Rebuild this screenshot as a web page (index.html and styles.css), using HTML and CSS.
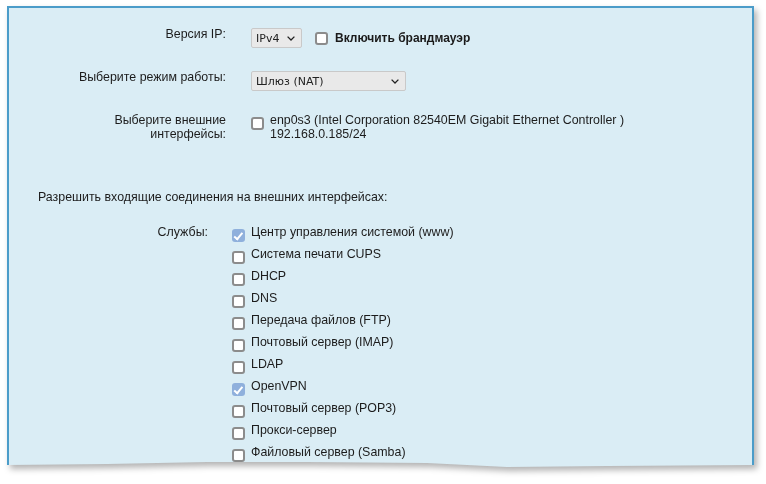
FILE: index.html
```html
<!DOCTYPE html>
<html lang="ru">
<head>
<meta charset="utf-8">
<title>Брандмауэр</title>
<link rel="stylesheet" href="styles.css">
</head>
<body>
<div class="shot">
  <div class="panel">
    <div class="form">
      <div class="lbl">Версия IP:</div>
      <div class="ctl inline">
        <div class="select sel-ip"><span>IPv4</span><svg class="chev" viewBox="0 0 8 5" width="8" height="5"><path d="M0.6 0.6 L4 4 L7.4 0.6" fill="none" stroke="#222" stroke-width="1.3"/></svg></div>
        <div class="check fw"><span class="box"></span><b>Включить брандмауэр</b></div>
      </div>

      <div class="lbl">Выберите режим работы:</div>
      <div class="ctl">
        <div class="select sel-mode"><span>Шлюз (NAT)</span><svg class="chev" viewBox="0 0 8 5" width="8" height="5"><path d="M0.6 0.6 L4 4 L7.4 0.6" fill="none" stroke="#222" stroke-width="1.3"/></svg></div>
      </div>

      <div class="lbl two">Выберите внешние<br>интерфейсы:</div>
      <div class="opt iface">
        <span class="box"></span>
        <span class="opt-text">enp0s3 (Intel Corporation 82540EM Gigabit Ethernet Controller )<br>192.168.0.185/24</span>
      </div>
    </div>

    <p class="allow">Разрешить входящие соединения на внешних интерфейсах:</p>

    <div class="services">
      <div class="lbl">Службы:</div>
      <div class="list">
        <div class="opt"><span class="box on"></span><span class="opt-text">Центр управления системой (www)</span></div>
        <div class="opt"><span class="box"></span><span class="opt-text">Система печати CUPS</span></div>
        <div class="opt"><span class="box"></span><span class="opt-text">DHCP</span></div>
        <div class="opt"><span class="box"></span><span class="opt-text">DNS</span></div>
        <div class="opt"><span class="box"></span><span class="opt-text">Передача файлов (FTP)</span></div>
        <div class="opt"><span class="box"></span><span class="opt-text">Почтовый сервер (IMAP)</span></div>
        <div class="opt"><span class="box"></span><span class="opt-text">LDAP</span></div>
        <div class="opt"><span class="box on"></span><span class="opt-text">OpenVPN</span></div>
        <div class="opt"><span class="box"></span><span class="opt-text">Почтовый сервер (POP3)</span></div>
        <div class="opt"><span class="box"></span><span class="opt-text">Прокси-сервер</span></div>
        <div class="opt"><span class="box"></span><span class="opt-text">Файловый сервер (Samba)</span></div>
      </div>
    </div>
  </div>
</div>
</body>
</html>
```
FILE: styles.css
```css
html, body {
  margin: 0;
  padding: 0;
  background: #ffffff;
}
body {
  width: 766px;
  height: 484px;
  overflow: hidden;
  font-family: "Liberation Sans", Arial, sans-serif;
  font-size: 12.4px;
  line-height: 15px;
  color: #1c1c1c;
}
.shot {
  padding: 6px 0 0 7px;
  filter: drop-shadow(3px 4px 3px rgba(0, 0, 0, 0.3));
}
.panel {
  width: 743px;
  height: 461px;
  background: #daedf5;
  border: 2px solid #4b9cc9;
  border-bottom: none;
  overflow: hidden;
  clip-path: polygon(0 0, 100% 0, 100% 459px, 600px 460px, 500px 461px, 420px 457px, 300px 456px, 200px 456px, 100px 458px, 0 459px);
}
.form {
  display: grid;
  grid-template-columns: 217px auto;
  column-gap: 25px;
  row-gap: 21px;
  align-items: start;
  padding-top: 18px;
}
.lbl {
  text-align: right;
  padding-top: 1px;
}
.lbl.two {
  line-height: 14px;
  padding-top: 1px;
}
.ctl {
  margin-top: 2px;
}
.inline {
  display: flex;
  align-items: center;
}
.select {
  display: flex;
  align-items: center;
  justify-content: space-between;
  box-sizing: border-box;
  height: 20px;
  padding: 0 6px 0 4px;
  background: #e9e9e9;
  border: 1px solid #c9c9c9;
  border-radius: 2px;
  font-family: "DejaVu Sans", sans-serif;
  font-size: 11px;
  color: #222;
}
.sel-ip { width: 51px; }
.sel-mode { width: 155px; }
.chev { display: block; }
.check {
  display: flex;
  align-items: center;
}
.fw {
  margin-left: 13px;
}
.fw b {
  margin-left: 7px;
  font-family: "Liberation Sans", Arial, sans-serif;
  font-weight: bold;
  font-size: 12px;
  color: #1a1a1a;
}
.box {
  flex: none;
  display: block;
  box-sizing: border-box;
  width: 13px;
  height: 13px;
  background: #ffffff;
  border: 2px solid #8c8c8c;
  border-radius: 3px;
}
.box.on {
  background: #8fb0dc;
  border: none;
  position: relative;
}
.box.on::after {
  content: "";
  position: absolute;
  left: 4px;
  top: 1.5px;
  width: 3px;
  height: 6.5px;
  border-right: 2px solid #fff;
  border-bottom: 2px solid #fff;
  transform: rotate(40deg);
}
.opt {
  display: flex;
  align-items: flex-start;
}
.opt .box {
  margin-top: 5px;
}
.opt-text {
  margin-left: 6px;
}
.iface .opt-text {
  line-height: 14px;
  padding-top: 1px;
}
.allow {
  margin: 49px 0 0 29px;
}
.services {
  display: grid;
  grid-template-columns: 199px auto;
  column-gap: 24px;
  align-items: start;
  margin-top: 20px;
}
.services .lbl {
  padding-top: 0;
}
.list {
  display: flex;
  flex-direction: column;
  gap: 5px;
}
.list .opt .box {
  margin-top: 4px;
}
```
